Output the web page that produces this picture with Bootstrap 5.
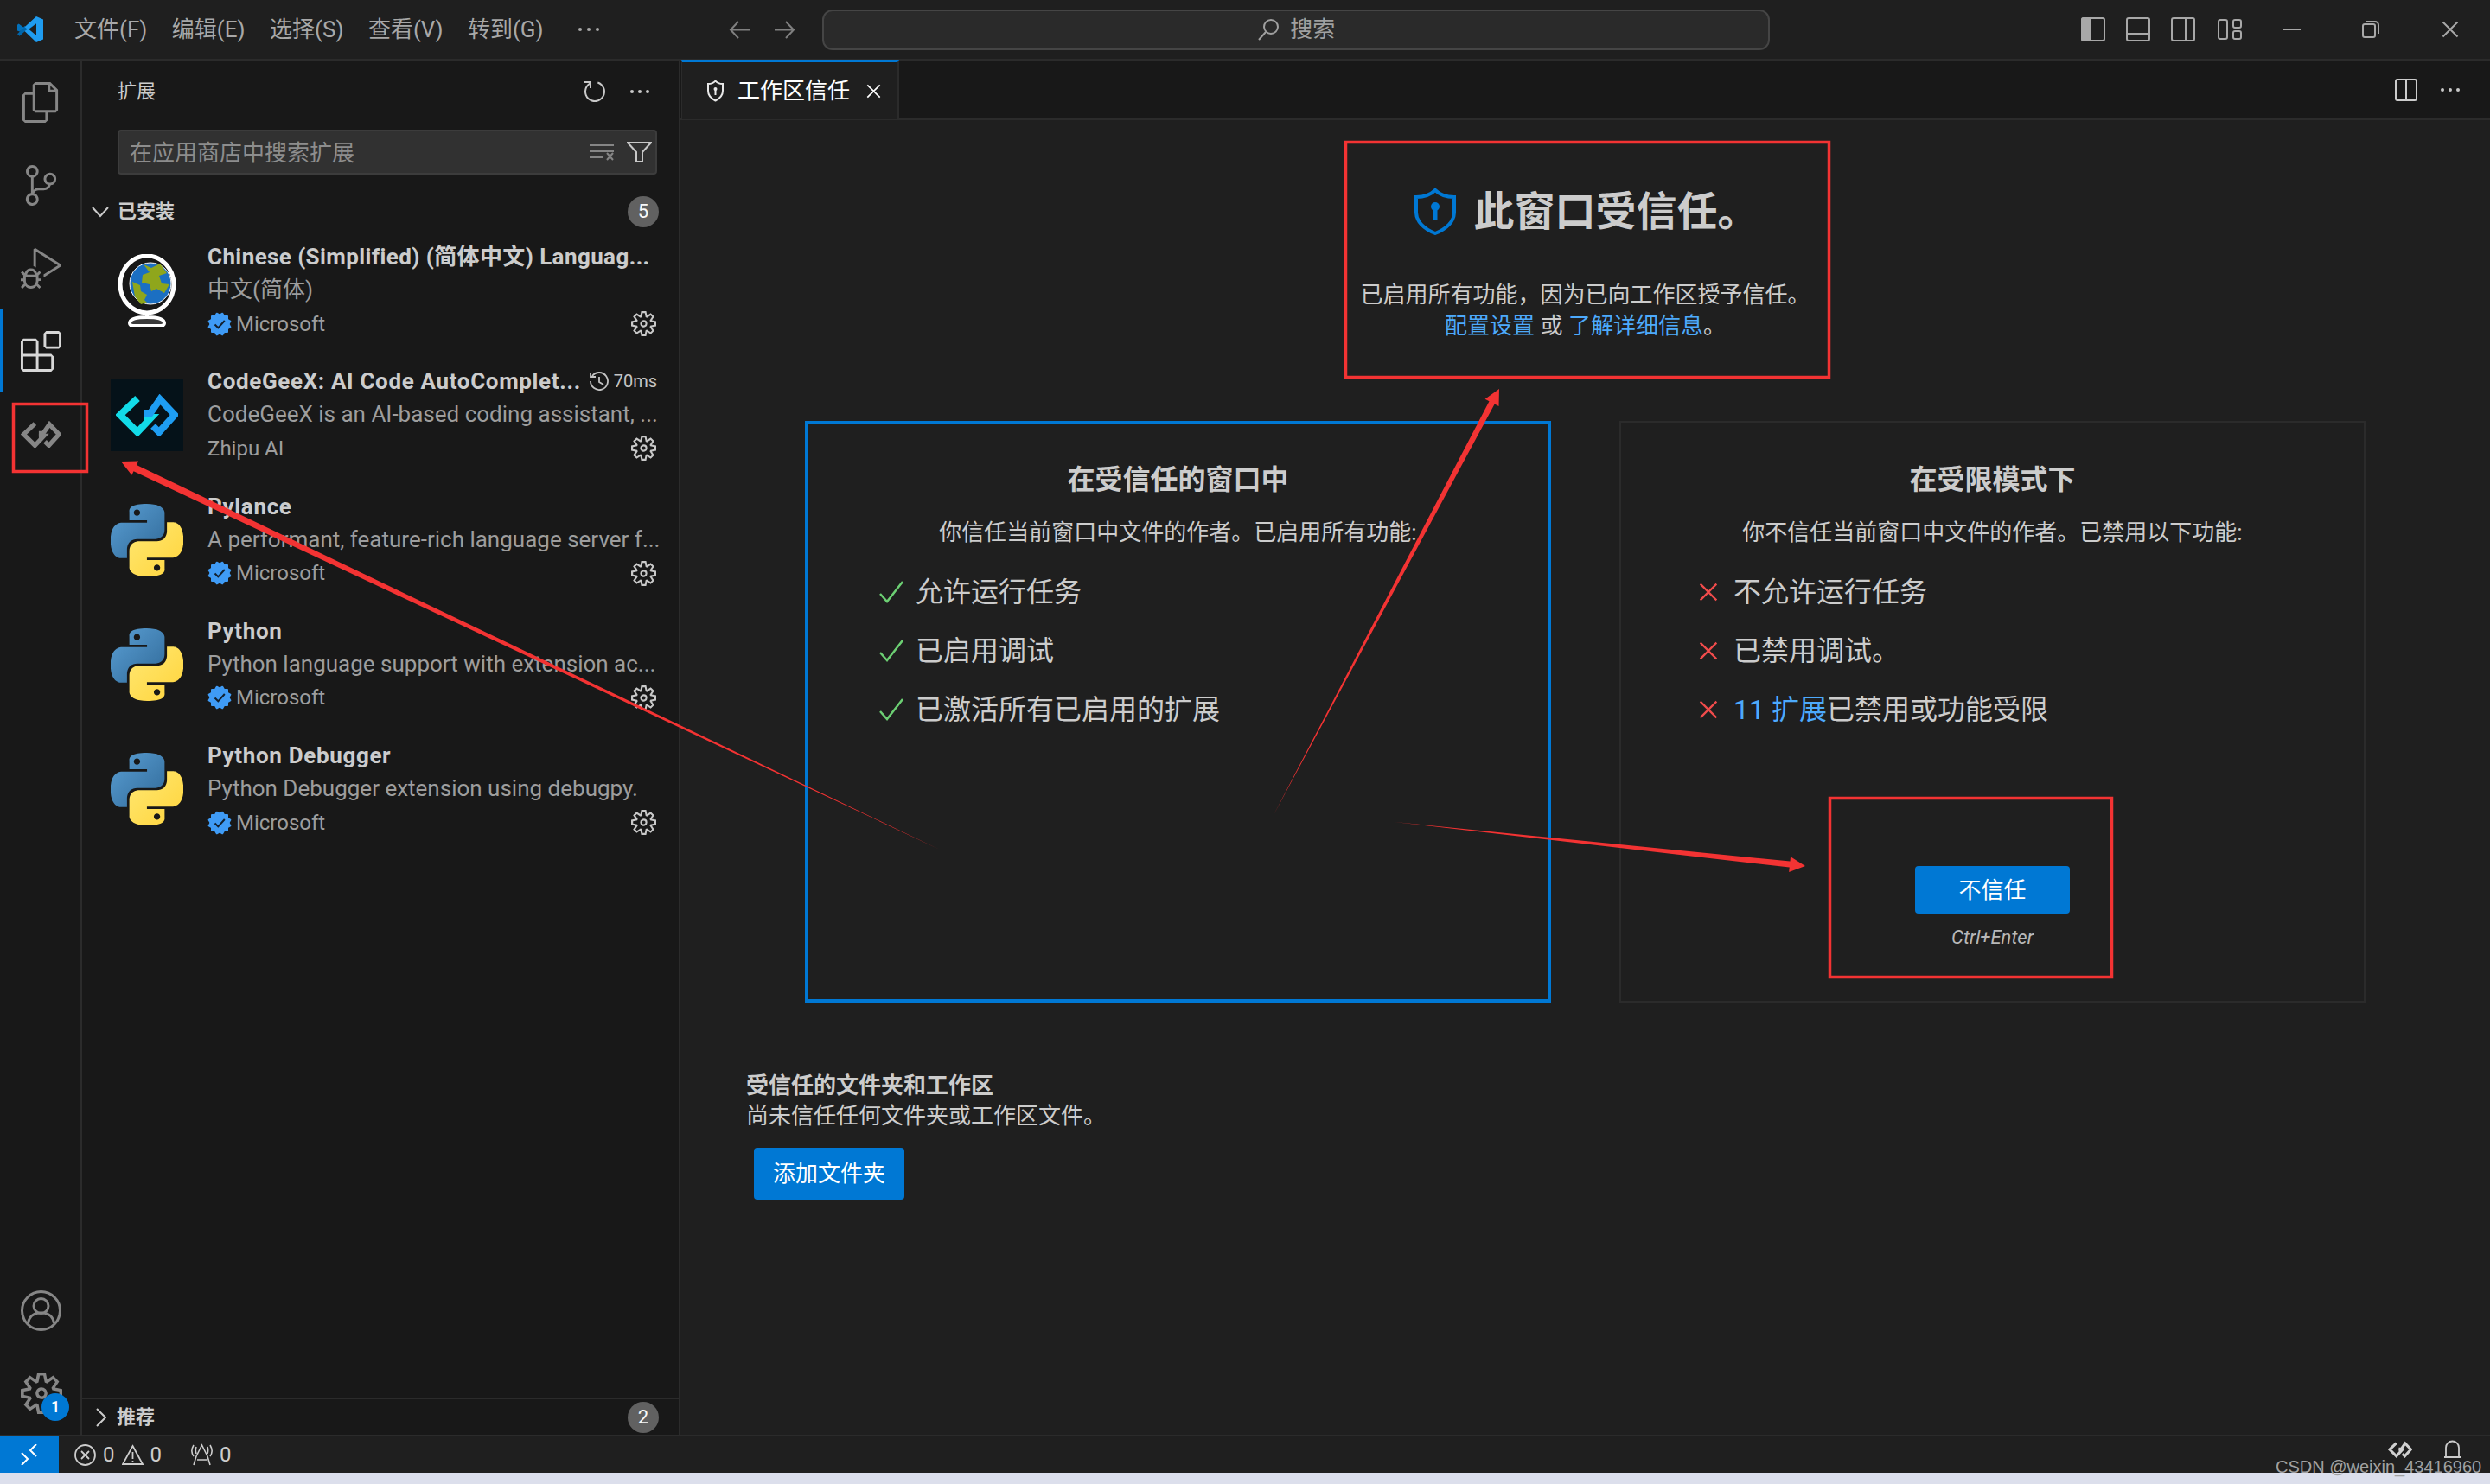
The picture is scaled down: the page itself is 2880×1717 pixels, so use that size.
<!DOCTYPE html>
<html lang="zh-CN">
<head>
<meta charset="UTF-8">
<title>工作区信任</title>
<link href="https://cdn.jsdelivr.net/npm/bootstrap@5.3.0/dist/css/bootstrap.min.css" rel="stylesheet">
<style>
  html, body { height: 1717px; overflow: hidden; }
  body {
    position: relative;
    background: #dcdfec;
    color: #cccccc;
    font-family: "Roboto", "Noto Sans CJK SC", sans-serif;
    font-size: 26px;
    line-height: 36px;
  }
  a { color: #4daafc; text-decoration: none; }
  svg { display: block; flex: none; }
  .defs-holder { position: absolute; width: 0; height: 0; }

  .app-shell { height: 1704px; }
  .title-bar { height: 70px; background: #1f1f1f; border-bottom: 2px solid #2b2b2b; color: #a8a8a8; flex: none; }
  .vs-logo { width: 32px; height: 32px; margin: 0 35px 0 19px; }
  .menu-entry { margin-right: 28.5px; line-height: 36px; white-space: nowrap; }
  .menu-more { margin-left: 11px; }
  .nav-arrow { color: #808080; width: 25px; height: 21px; margin-right: 27px; }
  .nav-arrow.first { margin-left: 149px; }
  .command-box {
    width: 1096px; height: 47px; margin-left: 4px; background: #2a2a2a;
    border: 2px solid #454545; border-radius: 12px; color: #a0a0a0; gap: 12px;
  }
  .win-icons { margin-left: auto; padding-right: 35px; color: #a8a8a8; }
  .win-icons svg + svg { margin-left: 24px; }
  .win-icons .wide-a { margin-left: 26px !important; }
  .win-icons .wide-b { margin-left: 48px !important; }
  .win-icons .wide-c { margin-left: 71px !important; }

  .work-area { min-height: 0; }
  .activity-bar { width: 95px; background: #181818; border-right: 2px solid #2b2b2b; flex: none; }
  .activity-item { height: 96px; color: #868686; position: relative; padding-left: 2px; }
  .activity-item.active { color: #d7d7d7; }
  .activity-item.active::before { content: ""; position: absolute; left: 0; top: 0; bottom: 0; width: 4px; background: #0078d4; }
  .activity-badge {
    position: absolute; left: 48px; top: 48px; width: 32px; height: 32px; padding: 0;
    border-radius: 50%; background: #0078d4; color: #fff; font-size: 18px; line-height: 32px; font-weight: 500;
  }

  .side-panel { width: 692px; background: #181818; border-right: 2px solid #2b2b2b; flex: none; }
  .panel-title { height: 72px; padding: 0 33px 0 41px; font-size: 22px; }
  .panel-actions { gap: 24px; }
  .search-wrap { margin: 8px 25px 0 41px; position: relative; }
  .search-wrap .form-control {
    height: 52px; background: #313131; border: 2px solid #3c3c3c; border-radius: 4px;
    color: #ccc; font-size: 26px; padding: 2px 90px 0 12px; box-shadow: none;
  }
  .search-wrap .form-control::placeholder { color: #8d8d8d; opacity: 1; }
  .search-tools { position: absolute; right: 6px; top: 14px; gap: 15px; color: #a8a8a8; }
  .section-head { height: 42px; margin-top: 22px; padding: 0 23px 0 11px; font-size: 22px; font-weight: 700; }
  .section-head .chev { width: 20px; height: 14px; margin-right: 10px; color: #ccc; }
  .count-pill {
    width: 36px; height: 36px; padding: 0; margin-left: auto; border-radius: 50%; background: #616161;
    color: #f8f8f8; font-size: 22px; font-weight: 400; line-height: 36px;
  }
  .ext-list { border-radius: 0; flex: 1; }
  .ext-row {
    height: 144.25px; padding: 12px 25px 0 33px; background: transparent; border: 0; color: #ccc; gap: 28px;
  }
  .ext-art { width: 84px; height: 84px; margin-top: 16px; flex: none; }
  .ext-geex { --geex-a: #12dbe8; --geex-b: #1e9df2; }
  .ext-text { min-width: 0; flex: 1; }
  .ext-name { height: 38px; line-height: 38px; font-weight: 700; white-space: nowrap; letter-spacing: .65px; }
  .ext-name.mixed-name { letter-spacing: .4px; }
  .ext-name .timing { margin-left: auto; font-size: 20px; font-weight: 400; gap: 5px; color: #c4c4c4; letter-spacing: 0; }
  .ext-desc { height: 38px; line-height: 38px; color: #9d9d9d; white-space: nowrap; }
  .ext-owner { height: 41px; color: #9d9d9d; gap: 5px; font-size: 24px; }
  .ext-owner .cog { margin-left: auto; margin-right: 1px; color: #c8c8c8; }
  .recommend-head { height: 43px; border-top: 2px solid #2b2b2b; padding: 0 23px 0 16px; font-size: 22px; font-weight: 700; }
  .recommend-head .chev { width: 12px; height: 22px; margin-right: 12px; color: #ccc; }

  .editor-pane { background: #1f1f1f; min-width: 0; }
  .tab-strip { height: 69px; background: #181818; border-bottom: 2px solid #2b2b2b; flex: none; }
  .doc-tab {
    width: 252px; height: 69px; margin-left: 1px; background: #1f1f1f; color: #fff; border-top: 3px solid #0078d4;
    border-left: 1px solid #2b2b2b; border-right: 2px solid #2b2b2b; padding-left: 28px; gap: 15px;
  }
  .doc-tab .tab-close { margin-left: 4px; }
  .tab-tools { margin-left: auto; padding-right: 34px; gap: 26px; color: #cccccc; }

  .trust-head { padding-top: 82px; }
  .trust-title { height: 52px; line-height: 52px; font-size: 47px; font-weight: 700; gap: 19px; margin-top: -2px; }
  .trust-sub { margin-top: 52px; }
  .mode-row { width: 1805px; height: 673px; margin: 92px auto 0; gap: 79px; }
  .mode-box { width: 863px; background: transparent; color: #ccc; border: 2px solid #2b2b2b; border-radius: 0; padding-top: 44px; }
  .mode-box.current { border: 4px solid #0078d4; padding-top: 42px; }
  .mode-name { font-size: 32px; line-height: 44px; font-weight: 700; margin: 0; }
  .mode-desc { margin: 21px 0 17px; line-height: 36px; }
  .mode-list { margin: 0; padding: 0 0 0 90px; font-size: 32px; }
  .mode-box.current .mode-list { padding-left: 82px; }
  .mode-list li { height: 68px; }
  .mode-list .mark-slot { width: 40px; flex: none; }
  .mode-box.current .mark-slot { width: 42px; }
  .deny-mark { color: #f14c4c; }
  .vs-btn {
    background: #0078d4; color: #fff; border: 0; border-radius: 4px; font-size: 26px; line-height: 36px; padding: 0;
  }
  .vs-btn:hover { background: #026ec1; color: #fff; }
  .deny-block { margin-top: auto; padding-bottom: 55px; }
  .deny-btn { width: 179px; height: 55px; }
  .deny-key { margin-top: 10px; font-size: 22px; line-height: 36px; font-style: italic; color: #b8b8b8; }
  .trusted-folders { margin: 79px 0 0 76px; }
  .trusted-folders h3 { font-size: 26px; line-height: 35px; font-weight: 700; margin: 0; }
  .trusted-folders p { margin: 0; line-height: 35px; }
  .add-btn { width: 174px; height: 60px; margin: 19px 0 0 9px; }

  .status-bar { height: 44px; background: #1f1f1f; border-top: 2px solid #2b2b2b; flex: none; font-size: 24px; color: #cccccc; }
  .remote-cell { width: 68px; height: 42px; background: #0078d4; color: #fff; }
  .status-bar .stat-first { margin-left: 18px; }
  .status-bar .stat-num { margin: 0 8px; }
  .status-bar .stat-far { margin-left: 26px; }
  .status-right { margin-left: auto; padding: 0 33px 12px 0; gap: 36px; color: #ccc; --geex-a: #d0d0d0; --geex-b: #d0d0d0; }
  .paint-layer { position: absolute; left: 0; top: 0; width: 2880px; height: 1717px; pointer-events: none; }
  .watermark { position: absolute; left: 2632px; top: 1686px; font-family: "Liberation Sans", sans-serif; font-size: 20px; line-height: 23px; color: #a2a2a2; white-space: nowrap; }
</style>
</head>
<body>

<svg class="defs-holder" aria-hidden="true">
  <defs>
    <linearGradient id="pyBlue" x1="0" y1="0" x2="1" y2="1"><stop offset="0" stop-color="#5a9fd4"/><stop offset="1" stop-color="#306998"/></linearGradient>
    <linearGradient id="pyYellow" x1="0" y1="0" x2="1" y2="1"><stop offset="0" stop-color="#ffe873"/><stop offset="1" stop-color="#ffd43b"/></linearGradient>
    <symbol id="i-python" viewBox="0 0 24 24">
      <path fill="url(#pyBlue)" fill-rule="evenodd" d="M14.25.18l.9.2.73.26.59.3.45.32.34.34.25.34.16.33.1.3.04.26.02.2-.01.13V8.5l-.05.63-.13.55-.21.46-.26.38-.3.31-.33.25-.35.19-.35.14-.33.1-.3.07-.26.04-.21.02H8.77l-.69.05-.59.14-.5.22-.41.27-.33.32-.27.35-.2.36-.15.37-.1.35-.07.32-.04.27-.02.21v3.06H3.17l-.21-.03-.28-.07-.32-.12-.35-.18-.36-.26-.36-.36-.35-.46-.32-.59-.28-.73-.21-.88-.14-1.05-.05-1.23.06-1.22.16-1.04.24-.87.32-.71.36-.57.4-.44.42-.33.42-.24.4-.16.36-.1.32-.05.24-.01h.16l.06.01h8.16v-.83H6.18l-.01-2.75-.02-.37.05-.34.11-.31.17-.28.25-.26.31-.23.38-.2.44-.18.51-.15.58-.12.64-.1.71-.06.77-.04.84-.02 1.27.05zm-6.3 1.98l-.23.33-.08.41.08.41.23.34.33.22.41.09.41-.09.33-.22.23-.34.08-.41-.08-.41-.23-.33-.33-.22-.41-.09-.41.09z"/>
      <path fill="url(#pyYellow)" fill-rule="evenodd" d="M21.04 6.11l.28.06.32.12.35.18.36.27.36.35.35.47.32.59.28.73.21.88.14 1.04.05 1.23-.06 1.23-.16 1.04-.24.86-.32.71-.36.57-.4.45-.42.33-.42.24-.4.16-.36.09-.32.05-.24.02-.16-.01h-8.22v.82h5.84l.01 2.76.02.36-.05.34-.11.31-.17.29-.25.25-.31.24-.38.2-.44.17-.51.15-.58.13-.64.09-.71.07-.77.04-.84.01-1.27-.04-1.07-.14-.9-.2-.73-.25-.59-.3-.45-.33-.34-.34-.25-.34-.16-.33-.1-.3-.04-.25-.02-.2.01-.13v-5.34l.05-.64.13-.54.21-.46.26-.38.3-.32.33-.24.35-.2.35-.14.33-.1.3-.06.26-.04.21-.02.13-.01h5.84l.69-.05.59-.14.5-.21.41-.28.33-.32.27-.35.2-.36.15-.36.1-.35.07-.32.04-.28.02-.21V6.07h2.09l.14.01zm-6.47 14.25l-.23.33-.08.41.08.41.23.33.33.23.41.08.41-.08.33-.23.23-.33.08-.41-.08-.41-.23-.33-.33-.23-.41-.08-.41.08z"/>
    </symbol>
    <symbol id="i-gear" viewBox="0 0 24 24">
      <path fill="currentColor" d="M19.85 8.75l4.15.83v4.84l-4.15.83 2.35 3.52-3.43 3.43-3.52-2.35-.83 4.15H9.58l-.83-4.15-3.52 2.35-3.43-3.43 2.35-3.52L0 14.42V9.58l4.15-.83L1.8 5.23 5.23 1.8l3.52 2.35L9.58 0h4.84l.83 4.15 3.52-2.35 3.43 3.43-2.35 3.52zm-1.57 5.07l4-.81v-2l-4-.81-.54-1.3 2.29-3.43-1.43-1.43-3.43 2.29-1.3-.54-.81-4h-2l-.81 4-1.3.54-3.43-2.29-1.43 1.43L6.38 8.9l-.54 1.3-4 .81v2l4 .81.54 1.3-2.29 3.43 1.43 1.43 3.43-2.29 1.3.54.81 4h2l.81-4 1.3-.54 3.43 2.29 1.43-1.43-2.29-3.43.54-1.3zm-8.186-4.672A3.43 3.43 0 0 1 12 8.57 3.44 3.44 0 0 1 15.43 12a3.43 3.43 0 1 1-5.336-2.852zm.956 4.274c.281.188.612.288.95.288A1.7 1.7 0 0 0 13.71 12a1.71 1.71 0 1 0-2.66 1.422z"/>
    </symbol>
    <symbol id="i-verified" viewBox="0 0 28 28">
      <g fill="#3f9bf5">
        <rect x="4" y="4" width="20" height="20" rx="1"/>
        <rect x="4" y="4" width="20" height="20" rx="1" transform="rotate(30 14 14)"/>
        <rect x="4" y="4" width="20" height="20" rx="1" transform="rotate(60 14 14)"/>
      </g>
      <path d="M8.5 14.5l3.8 3.8 7.5-8.3" fill="none" stroke="#12202e" stroke-width="2"/>
    </symbol>
    <symbol id="i-geex" viewBox="6 18 72 48">
      <path d="M31 23L11 42l20 20 16-17H38" fill="none" stroke="var(--geex-a, currentColor)" stroke-width="8"/>
      <path d="M38 40h8l11-16 17 18-18 20-7-7" fill="none" stroke="var(--geex-b, currentColor)" stroke-width="8"/>
    </symbol>
    <symbol id="i-x" viewBox="0 0 20 20">
      <path d="M1.5 1.5l17 17m0-17l-17 17" fill="none" stroke="currentColor" stroke-width="2"/>
    </symbol>
  </defs>
</svg>

<div class="app-shell d-flex flex-column">

  <!-- title bar -->
  <header class="title-bar d-flex align-items-center">
    <svg class="vs-logo" viewBox="0 0 32 32">
      <path fill="#0065a9" d="M2.5 20L1 21.3l2.6 2.4 5.8-5.2 3.9-3.5-3.9-3.1z"/>
      <path fill="#007acc" d="M1 10.7l1.7-1.3 6.7 5 13.6-13 .1 7.8-9.6 7.3-3.9-3-6 5.1L1 17.6z" opacity=".9"/>
      <path fill="#1f9cf0" d="M23 1l8 3.6v22.8L23 31l-13.5-13 3.9-2.9L23 23V9l-9.6 7.1-3.9-2.8z"/>
    </svg>
    <nav class="nav flex-nowrap align-items-center">
      <span class="menu-entry">文件(F)</span>
      <span class="menu-entry">编辑(E)</span>
      <span class="menu-entry">选择(S)</span>
      <span class="menu-entry">查看(V)</span>
      <span class="menu-entry">转到(G)</span>
      <svg class="menu-more" width="26" height="6" viewBox="0 0 26 6"><g fill="#a8a8a8"><circle cx="3" cy="3" r="2"/><circle cx="13" cy="3" r="2"/><circle cx="23" cy="3" r="2"/></g></svg>
    </nav>
    <svg class="nav-arrow first" viewBox="0 0 25 21"><path d="M11 1L2 10.500l9 9.500M2 10.500h22" fill="none" stroke="currentColor" stroke-width="2"/></svg>
    <svg class="nav-arrow" viewBox="0 0 25 21"><path d="M14 1l9 9.500-9 9.500M23 10.500H1" fill="none" stroke="currentColor" stroke-width="2"/></svg>
    <div class="command-box d-flex align-items-center justify-content-center">
      <svg width="26" height="26" viewBox="0 0 26 26"><circle cx="16" cy="10" r="8" fill="none" stroke="currentColor" stroke-width="2"/><path d="M10 16L2 25" stroke="currentColor" stroke-width="2"/></svg>
      <span>搜索</span>
    </div>
    <div class="win-icons d-flex align-items-center">
      <svg width="28" height="28" viewBox="0 0 28 28"><path d="M3 0h8v28H3a3 3 0 0 1-3-3V3a3 3 0 0 1 3-3z" fill="currentColor"/><rect x="1" y="1" width="26" height="26" rx="2" fill="none" stroke="currentColor" stroke-width="2"/></svg>
      <svg width="28" height="28" viewBox="0 0 28 28"><rect x="1" y="1" width="26" height="26" rx="2" fill="none" stroke="currentColor" stroke-width="2"/><path d="M1 19h26" stroke="currentColor" stroke-width="2"/></svg>
      <svg width="28" height="28" viewBox="0 0 28 28"><rect x="1" y="1" width="26" height="26" rx="2" fill="none" stroke="currentColor" stroke-width="2"/><path d="M17 1v26" stroke="currentColor" stroke-width="2"/></svg>
      <svg class="wide-a" width="28" height="24" viewBox="0 0 28 24"><g fill="none" stroke="currentColor" stroke-width="2"><rect x="1" y="1" width="10" height="22" rx="2"/><rect x="18" y="1" width="9" height="9" rx="2"/><rect x="18" y="14" width="9" height="9" rx="2"/></g></svg>
      <svg class="wide-b" width="20" height="2" viewBox="0 0 20 2"><path d="M0 1h20" stroke="currentColor" stroke-width="2"/></svg>
      <svg class="wide-c" width="20" height="20" viewBox="0 0 20 20"><g fill="none" stroke="currentColor" stroke-width="2"><rect x="1" y="4" width="14" height="15" rx="2"/><path d="M5 1h10a4 4 0 0 1 4 4v10"/></g></svg>
      <svg class="wide-c" width="22" height="20" viewBox="0 0 20 20"><use href="#i-x"/></svg>
    </div>
  </header>

  <div class="work-area d-flex flex-grow-1">

    <!-- activity bar -->
    <aside class="activity-bar d-flex flex-column">
      <div class="activity-item d-flex align-items-center justify-content-center">
        <svg width="47" height="47" viewBox="0 0 24 24"><path fill="currentColor" d="M17.500 0h-9L7 1.500V6H2.500L1 7.500v15.070L2.500 24h12.070L16 22.570V18h4.700l1.300-1.430V4.500L17.500 0zm0 2.120l2.380 2.380H17.500V2.120zm-3 20.380h-12v-15H7v9.070L8.500 18h6v4.500zm6-6h-12v-15H16V6h4.500v10.500z"/></svg>
      </div>
      <div class="activity-item d-flex align-items-center justify-content-center">
        <svg width="47" height="47" viewBox="0 0 24 24"><path fill="currentColor" d="M21.007 8.222A3.738 3.738 0 0 0 15.045 5.200a3.737 3.737 0 0 0 1.156 6.583 2.988 2.988 0 0 1-2.668 1.670h-2.990a4.456 4.456 0 0 0-2.989 1.165V7.400a3.737 3.737 0 1 0-1.494 0v9.117a3.776 3.776 0 1 0 1.816.099 2.990 2.990 0 0 1 2.668-1.667h2.990a4.484 4.484 0 0 0 4.223-3.039 3.736 3.736 0 0 0 3.250-3.687zM4.565 3.738a2.242 2.242 0 1 1 4.484 0 2.242 2.242 0 0 1-4.484 0zm4.484 16.441a2.242 2.242 0 1 1-4.484 0 2.242 2.242 0 0 1 4.484 0zm8.221-9.715a2.242 2.242 0 1 1 0-4.485 2.242 2.242 0 0 1 0 4.485z"/></svg>
      </div>
      <div class="activity-item d-flex align-items-center justify-content-center">
        <svg width="47" height="47" viewBox="0 0 24 24"><path fill="currentColor" d="M10.940 13.500l-1.320 1.320a3.730 3.730 0 0 0-7.240 0L1.060 13.500 0 14.560l1.720 1.720-.22.220V18H0v1.500h1.500v.08c.077.489.214.966.41 1.420L0 22.940 1.060 24l1.650-1.650A4.308 4.308 0 0 0 6 24a4.310 4.310 0 0 0 3.290-1.650L10.940 24 12 22.940 10.090 21c.198-.464.336-.951.41-1.450v-.1H12V18h-1.500v-1.500l-.22-.22L12 14.560l-1.060-1.060zM6 13.500a2.250 2.250 0 0 1 2.250 2.250h-4.500A2.250 2.250 0 0 1 6 13.500zm3 6a3.330 3.330 0 0 1-3 3 3.330 3.330 0 0 1-3-3v-2.250h6v2.250zm14.760-9.900v1.260L13.500 17.370V15.600l8.500-5.370L9 2v9.460a5.070 5.070 0 0 0-1.500-.72V.63L8.640 0l15.120 9.600z"/></svg>
      </div>
      <div class="activity-item active d-flex align-items-center justify-content-center">
        <svg width="47" height="47" viewBox="0 0 24 24"><path fill="currentColor" d="M13.500 1.500L15 0h7.500L24 1.500V9l-1.500 1.500H15L13.500 9V1.500zm1.500 0V9h7.500V1.500H15zM0 15V6l1.500-1.500H9L10.500 6v7.500H18l1.500 1.500v7.500L18 24H1.500L0 22.500V15zm9-1.500V6H1.500v7.500H9zM9 15H1.500v7.500H9V15zm1.500 7.500H18V15h-7.500v7.500z"/></svg>
      </div>
      <div class="activity-item d-flex align-items-center justify-content-center">
        <svg width="47" height="31"><use href="#i-geex"/></svg>
      </div>
      <div class="mt-auto">
        <div class="activity-item d-flex align-items-center justify-content-center">
          <svg width="47" height="47" viewBox="0 0 47 47"><g fill="none" stroke="currentColor" stroke-width="3"><circle cx="23.500" cy="23.500" r="22"/><circle cx="23.500" cy="18" r="8.500"/><path d="M8.500 38c1-8 7-12 15-12s14 4 15 12"/></g></svg>
        </div>
        <div class="activity-item d-flex align-items-center justify-content-center">
          <svg width="48" height="48"><use href="#i-gear"/></svg>
          <span class="badge activity-badge">1</span>
        </div>
      </div>
    </aside>

    <!-- extensions panel -->
    <section class="side-panel d-flex flex-column">
      <div class="panel-title d-flex align-items-center justify-content-between">
        <span>扩展</span>
        <div class="panel-actions d-flex align-items-center">
          <svg width="32" height="32" viewBox="0 0 16 16"><path fill="#c8c8c8" fill-rule="evenodd" d="M4.681 3H2V2h3.500l.5.500V6H5V4a5 5 0 1 0 4.530-.761l.302-.954A6 6 0 1 1 4.681 3z"/></svg>
          <svg width="24" height="6" viewBox="0 0 24 6"><g fill="#c8c8c8"><circle cx="3" cy="3" r="2"/><circle cx="12" cy="3" r="2"/><circle cx="21" cy="3" r="2"/></g></svg>
        </div>
      </div>
      <div class="search-wrap">
        <input class="form-control" type="text" placeholder="在应用商店中搜索扩展">
        <div class="search-tools d-flex align-items-center">
          <svg width="28" height="20" viewBox="0 0 28 20"><path d="M0 2h28M0 9h28M0 16h16M20 11l7 8m0-8l-7 8" fill="none" stroke="#858585" stroke-width="2"/></svg>
          <svg width="29" height="24" viewBox="0 0 29 24"><path d="M1 1h27L18 12v11h-7V12z" fill="none" stroke="#c8c8c8" stroke-width="2"/></svg>
        </div>
      </div>
      <div class="section-head d-flex align-items-center">
        <svg class="chev" viewBox="0 0 20 14"><path d="M1 2l9 10 9-10" fill="none" stroke="currentColor" stroke-width="2"/></svg>
        <span>已安装</span>
        <span class="badge count-pill">5</span>
      </div>

      <div class="ext-list list-group">
        <div class="ext-row list-group-item d-flex align-items-start">
          <svg class="ext-art" viewBox="0 0 84 84">
            <ellipse cx="42" cy="35" rx="31" ry="33" fill="#181818" stroke="#fff" stroke-width="5"/>
            <circle cx="46" cy="34" r="24" fill="#1b6fc2" stroke="#fff" stroke-width="1"/>
            <path d="M38 12l9 4 10-5 8 11-9 3 3 9 9 1-6 10-9-5-6 3-2-8-9-2 1-9 8-3z" fill="#8fa61c"/>
            <path d="M25 32l9 4 1 7 7 4-3 6 3 3-7 2-7-9z" fill="#8fa61c"/>
            <path d="M42 68v5M22 80c0-5 8-7 20-7s20 2 20 7c0 2-2 3-4 3H26c-2 0-4-1-4-3z" fill="#3a3a3a" stroke="#fff" stroke-width="4"/>
          </svg>
          <div class="ext-text">
            <div class="ext-name mixed-name">Chinese (Simplified) (简体中文) Languag...</div>
            <div class="ext-desc">中文(简体)</div>
            <div class="ext-owner d-flex align-items-center">
              <svg width="28" height="28"><use href="#i-verified"/></svg><span>Microsoft</span>
              <svg class="cog" width="29" height="29"><use href="#i-gear"/></svg>
            </div>
          </div>
        </div>
        <div class="ext-row list-group-item d-flex align-items-start">
          <svg class="ext-art ext-geex" viewBox="0 0 84 84">
            <rect width="84" height="84" fill="#051219"/>
            <use href="#i-geex" x="6" y="18" width="72" height="48"/>
          </svg>
          <div class="ext-text">
            <div class="ext-name d-flex align-items-center">
              <span>CodeGeeX: AI Code AutoComplet...</span>
              <span class="timing d-flex align-items-center">
                <svg width="23" height="24" viewBox="0 0 23 24"><path d="M3 6a10 10 0 1 1-2 6M1 2v5h6M11 7v6l5 3" fill="none" stroke="currentColor" stroke-width="1.800"/></svg>70ms
              </span>
            </div>
            <div class="ext-desc">CodeGeeX is an AI-based coding assistant, ...</div>
            <div class="ext-owner d-flex align-items-center">
              <span>Zhipu AI</span>
              <svg class="cog" width="29" height="29"><use href="#i-gear"/></svg>
            </div>
          </div>
        </div>
        <div class="ext-row list-group-item d-flex align-items-start">
          <svg class="ext-art"><use href="#i-python"/></svg>
          <div class="ext-text">
            <div class="ext-name">Pylance</div>
            <div class="ext-desc">A performant, feature-rich language server f...</div>
            <div class="ext-owner d-flex align-items-center">
              <svg width="28" height="28"><use href="#i-verified"/></svg><span>Microsoft</span>
              <svg class="cog" width="29" height="29"><use href="#i-gear"/></svg>
            </div>
          </div>
        </div>
        <div class="ext-row list-group-item d-flex align-items-start">
          <svg class="ext-art"><use href="#i-python"/></svg>
          <div class="ext-text">
            <div class="ext-name">Python</div>
            <div class="ext-desc">Python language support with extension ac...</div>
            <div class="ext-owner d-flex align-items-center">
              <svg width="28" height="28"><use href="#i-verified"/></svg><span>Microsoft</span>
              <svg class="cog" width="29" height="29"><use href="#i-gear"/></svg>
            </div>
          </div>
        </div>
        <div class="ext-row list-group-item d-flex align-items-start">
          <svg class="ext-art"><use href="#i-python"/></svg>
          <div class="ext-text">
            <div class="ext-name">Python Debugger</div>
            <div class="ext-desc">Python Debugger extension using debugpy.</div>
            <div class="ext-owner d-flex align-items-center">
              <svg width="28" height="28"><use href="#i-verified"/></svg><span>Microsoft</span>
              <svg class="cog" width="29" height="29"><use href="#i-gear"/></svg>
            </div>
          </div>
        </div>
      </div>

      <div class="recommend-head d-flex align-items-center">
        <svg class="chev" viewBox="0 0 12 22"><path d="M1 1l10 10L1 21" fill="none" stroke="currentColor" stroke-width="2"/></svg>
        <span>推荐</span>
        <span class="badge count-pill">2</span>
      </div>
    </section>

    <!-- editor -->
    <main class="editor-pane flex-grow-1 d-flex flex-column">
      <div class="tab-strip d-flex align-items-center">
        <div class="doc-tab d-flex align-items-center">
          <svg width="21" height="26" viewBox="0 0 21 26"><path d="M10.500 1.500c2 2.500 5 3.500 8.500 3.500v8c0 5-3.500 9-8.500 11.500C5.500 22 2 18 2 13V5c3.500 0 6.500-1 8.500-3.500z" fill="none" stroke="#e8e8e8" stroke-width="2"/><circle cx="10.500" cy="11" r="2" fill="#e8e8e8"/><path d="M10.500 12v6" stroke="#e8e8e8" stroke-width="2"/></svg>
          <span>工作区信任</span>
          <svg class="tab-close" width="17" height="17"><use href="#i-x"/></svg>
        </div>
        <div class="tab-tools d-flex align-items-center">
          <svg width="26" height="26" viewBox="0 0 26 26"><rect x="1" y="1" width="24" height="24" rx="2" fill="none" stroke="currentColor" stroke-width="2"/><path d="M13 1v24" stroke="currentColor" stroke-width="2"/></svg>
          <svg width="24" height="6" viewBox="0 0 24 6"><g fill="#c8c8c8"><circle cx="3" cy="3" r="2"/><circle cx="12" cy="3" r="2"/><circle cx="21" cy="3" r="2"/></g></svg>
        </div>
      </div>

      <div class="flex-grow-1">
        <div class="trust-head text-center">
          <div class="trust-title d-flex align-items-center justify-content-center">
            <svg width="52" height="54" viewBox="0 0 52 54"><path d="M26 2c5 5 12 8 22 8v18c0 10-9 19-22 24C13 47 4 38 4 28V10c10 0 17-3 22-8z" fill="none" stroke="#0078d4" stroke-width="4"/><circle cx="26" cy="21" r="5" fill="#0078d4"/><path d="M26 22v14" stroke="#0078d4" stroke-width="5"/></svg>
            <span>此窗口受信任。</span>
          </div>
          <div class="trust-sub">已启用所有功能，因为已向工作区授予信任。<br><a href="#">配置设置</a> 或 <a href="#">了解详细信息</a>。</div>
        </div>

        <div class="mode-row d-flex">
          <div class="mode-box current card d-flex flex-column">
            <h2 class="mode-name text-center">在受信任的窗口中</h2>
            <p class="mode-desc text-center">你信任当前窗口中文件的作者。已启用所有功能:</p>
            <ul class="mode-list list-unstyled">
              <li class="d-flex align-items-center"><span class="mark-slot"><svg width="28" height="26" viewBox="0 0 28 26"><path d="M1 15l8 9L27 1" fill="none" stroke="#6ccf73" stroke-width="2.500"/></svg></span>允许运行任务</li>
              <li class="d-flex align-items-center"><span class="mark-slot"><svg width="28" height="26" viewBox="0 0 28 26"><path d="M1 15l8 9L27 1" fill="none" stroke="#6ccf73" stroke-width="2.500"/></svg></span>已启用调试</li>
              <li class="d-flex align-items-center"><span class="mark-slot"><svg width="28" height="26" viewBox="0 0 28 26"><path d="M1 15l8 9L27 1" fill="none" stroke="#6ccf73" stroke-width="2.500"/></svg></span>已激活所有已启用的扩展</li>
            </ul>
          </div>
          <div class="mode-box card d-flex flex-column">
            <h2 class="mode-name text-center">在受限模式下</h2>
            <p class="mode-desc text-center">你不信任当前窗口中文件的作者。已禁用以下功能:</p>
            <ul class="mode-list list-unstyled">
              <li class="d-flex align-items-center"><span class="mark-slot"><svg class="deny-mark" width="22" height="22"><use href="#i-x"/></svg></span>不允许运行任务</li>
              <li class="d-flex align-items-center"><span class="mark-slot"><svg class="deny-mark" width="22" height="22"><use href="#i-x"/></svg></span>已禁用调试。</li>
              <li class="d-flex align-items-center"><span class="mark-slot"><svg class="deny-mark" width="22" height="22"><use href="#i-x"/></svg></span><span><a href="#">11 扩展</a>已禁用或功能受限</span></li>
            </ul>
            <div class="deny-block text-center">
              <button class="btn vs-btn deny-btn" type="button">不信任</button>
              <div class="deny-key">Ctrl+Enter</div>
            </div>
          </div>
        </div>

        <div class="trusted-folders">
          <h3>受信任的文件夹和工作区</h3>
          <p>尚未信任任何文件夹或工作区文件。</p>
          <button class="btn vs-btn add-btn" type="button">添加文件夹</button>
        </div>
      </div>
    </main>
  </div>

  <!-- status bar -->
  <footer class="status-bar d-flex align-items-center">
    <div class="remote-cell d-flex align-items-center justify-content-center">
      <svg width="20" height="24" viewBox="0 0 20 24"><path d="M1 10l7 7-7 7M18 0l-7 7 7 7" fill="none" stroke="#fff" stroke-width="2"/></svg>
    </div>
    <svg class="stat-first" width="25" height="25" viewBox="0 0 25 25"><circle cx="12.500" cy="12.500" r="11.500" fill="none" stroke="#ccc" stroke-width="1.800"/><path d="M8 8l9 9m0-9l-9 9" stroke="#ccc" stroke-width="1.800"/></svg>
    <span class="stat-num">0</span>
    <svg width="25" height="24" viewBox="0 0 25 24"><path d="M12.500 2L24 23H1z" fill="none" stroke="#ccc" stroke-width="1.800"/><path d="M12.500 9v8m0 2v2" stroke="#ccc" stroke-width="1.800"/></svg>
    <span class="stat-num">0</span>
    <svg class="stat-far" width="25" height="26" viewBox="0 0 25 26"><g fill="none" stroke="#ccc" stroke-width="1.600"><path d="M6 15L12.500 2 19 15l3 10M6 15L3 25M7 19h11M3 2C0 7 0 11 3 15M22 2c3 5 3 9 0 13M6 4C5 7 5 9 6 12M19 4c1 3 1 5 0 8"/></g></svg>
    <span class="stat-num">0</span>
    <div class="status-right d-flex align-items-center">
      <svg width="28" height="20"><use href="#i-geex"/></svg>
      <svg width="21" height="22" viewBox="0 0 21 22"><path d="M1 20h19M3 20V9a7.500 7.500 0 0 1 15 0v11" fill="none" stroke="#ccc" stroke-width="1.800"/></svg>
    </div>
  </footer>
</div>

<div class="watermark">CSDN @weixin_43416960</div>

<!-- hand drawn annotations that sit over the page -->
<svg class="paint-layer" viewBox="0 0 2880 1717">
  <g fill="none" stroke="#f33333" stroke-width="3.500">
    <rect x="15.500" y="467.500" width="85" height="78"/>
    <rect x="1556.500" y="164.500" width="559" height="272"/>
    <rect x="2116.500" y="923.500" width="326" height="207"/>
  </g>
  <g id="arrows" fill="#f33333"></g>
</svg>

<script>
  // tapered arrows: [tailX, tailY, tipX, tipY, shaft half width]
  const arrows = [
    [1087, 983, 140, 534, 4],
    [1473, 943, 1734, 450, 3.5],
    [1613, 951, 2088, 1002, 3.5]
  ];
  const layer = document.getElementById('arrows');
  arrows.forEach(([x1, y1, x2, y2, w]) => {
    const len = Math.hypot(x2 - x1, y2 - y1);
    const dx = (x2 - x1) / len, dy = (y2 - y1) / len;
    const nx = x2 - dx * 18, ny = y2 - dy * 18;
    const pts = [
      [x1, y1],
      [nx - dy * w, ny + dx * w],
      [nx - dy * 9, ny + dx * 9],
      [x2, y2],
      [nx + dy * 9, ny - dx * 9],
      [nx + dy * w, ny - dx * w]
    ];
    const poly = document.createElementNS('http://www.w3.org/2000/svg', 'polygon');
    poly.setAttribute('points', pts.map(p => p.join(',')).join(' '));
    layer.appendChild(poly);
  });
</script>
<script src="https://cdn.jsdelivr.net/npm/bootstrap@5.3.0/dist/js/bootstrap.bundle.min.js"></script>
</body>
</html>
